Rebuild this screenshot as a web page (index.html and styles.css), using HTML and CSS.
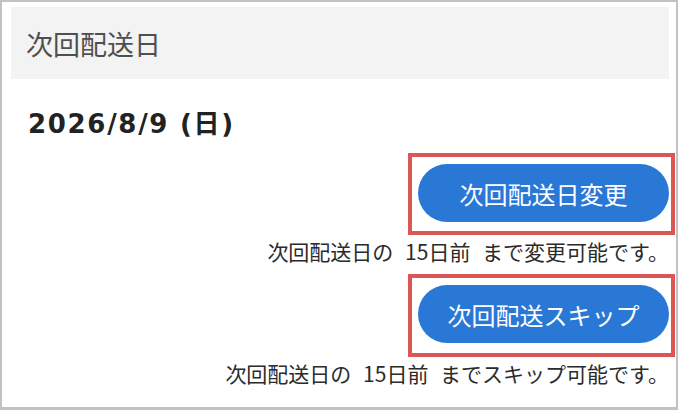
FILE: index.html
```html
<!DOCTYPE html>
<html lang="ja">
<head>
<meta charset="utf-8">
<title>次回配送日</title>
<link rel="stylesheet" href="styles.css">
</head>
<body>
<div class="frame">
  <div class="header">次回配送日</div>
  <div class="date">2026/8/9 (日)</div>
  <div class="actions">
    <div class="highlight">
      <button class="pill" type="button">次回配送日変更</button>
    </div>
    <p class="note">次回配送日の 15日前 まで変更可能です。</p>
    <div class="highlight highlight-second">
      <button class="pill" type="button">次回配送スキップ</button>
    </div>
    <p class="note">次回配送日の 15日前 までスキップ可能です。</p>
  </div>
</div>
</body>
</html>
```
FILE: styles.css
```css
html, body {
  margin: 0;
  padding: 0;
  background: #ffffff;
}

.frame {
  box-sizing: border-box;
  width: 678px;
  height: 410px;
  border: 2px solid #c2c2c2;
  border-bottom-width: 3px;
  padding: 5px 7px 0 9px;
  font-family: "Noto Sans CJK JP", "Noto Sans", sans-serif;
  overflow: hidden;
}

.header {
  height: 72px;
  background: #f3f3f3;
  display: flex;
  align-items: center;
  padding-left: 15px;
  font-size: 27px;
  color: #4f4f4f;
}

.date {
  margin-top: 30px;
  height: 30px;
  line-height: 30px;
  padding-left: 17px;
  font-family: "DejaVu Sans", "Noto Sans CJK JP", sans-serif;
  font-weight: bold;
  font-size: 26px;
  letter-spacing: 1.7px;
  color: #222222;
}

.actions {
  margin-top: 14px;
  display: flex;
  flex-direction: column;
  align-items: flex-end;
}

.highlight {
  border: 4px solid #dc5656;
  padding: 7px 2px 9px 6px;
  margin-right: -6px;
  display: flex;
}

.highlight-second {
  margin-top: 9px;
  padding-bottom: 10px;
}

.pill {
  width: 251px;
  height: 58px;
  border: none;
  border-radius: 29px;
  background: #2a78d6;
  color: #ffffff;
  font-family: "Noto Sans CJK JP", sans-serif;
  font-size: 24px;
  padding: 0;
  margin: 0;
  display: flex;
  align-items: center;
  justify-content: center;
}

.note {
  margin: 2px 0 0 0;
  height: 28px;
  line-height: 28px;
  font-size: 21px;
  word-spacing: 7px;
  color: #2b2b2b;
  white-space: nowrap;
}
```
